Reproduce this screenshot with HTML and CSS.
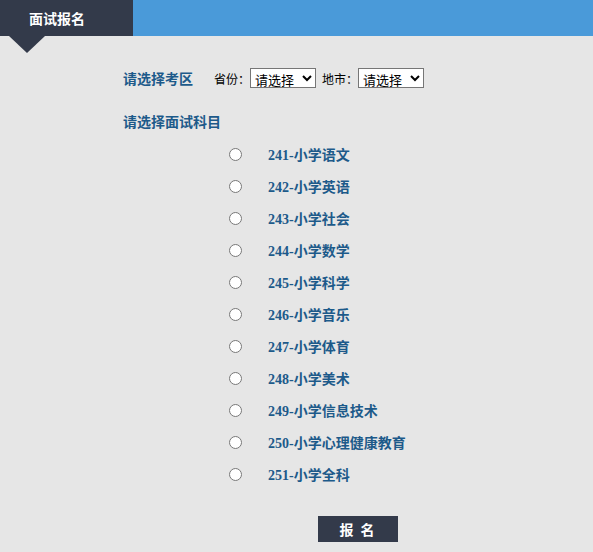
FILE: index.html
```html
<!DOCTYPE html>
<html lang="zh-CN">
<head>
    <meta charset="UTF-8">
    <title>面试报名</title>
    <link rel="stylesheet" href="styles.css">
</head>
<body>
    <div class="header">
        <div class="tab">面试报名</div>
    </div>
    <div class="content">
        <div class="area">
            <span class="title">请选择考区</span>
            <label class="field">省份：</label>
            <select class="pick"><option>请选择</option></select>
            <label class="field">地市：</label>
            <select class="pick"><option>请选择</option></select>
        </div>
        <div class="title subject-title">请选择面试科目</div>
        <ul class="subjects">
            <li><input type="radio" name="km"><span>241-小学语文</span></li>
            <li><input type="radio" name="km"><span>242-小学英语</span></li>
            <li><input type="radio" name="km"><span>243-小学社会</span></li>
            <li><input type="radio" name="km"><span>244-小学数学</span></li>
            <li><input type="radio" name="km"><span>245-小学科学</span></li>
            <li><input type="radio" name="km"><span>246-小学音乐</span></li>
            <li><input type="radio" name="km"><span>247-小学体育</span></li>
            <li><input type="radio" name="km"><span>248-小学美术</span></li>
            <li><input type="radio" name="km"><span>249-小学信息技术</span></li>
            <li><input type="radio" name="km"><span>250-小学心理健康教育</span></li>
            <li><input type="radio" name="km"><span>251-小学全科</span></li>
        </ul>
        <div class="actions">
            <button type="button" class="submit">报 名</button>
        </div>
    </div>
</body>
</html>
```
FILE: styles.css
```css
body {
    margin: 0;
    background-color: #e6e6e6;
    font-family: "Noto Sans CJK SC", sans-serif;
    height: 552px;
    overflow: hidden;
}
.header {
    height: 36px;
    background-color: #4a9ad9;
    display: flex;
}
.tab {
    position: relative;
    width: 133px;
    box-sizing: border-box;
    padding-left: 29px;
    background-color: #333a4a;
    color: #fff;
    font-size: 14px;
    font-weight: bold;
    line-height: 36px;
}
.tab::after {
    content: "";
    position: absolute;
    left: 9px;
    top: 36px;
    border-left: 18px solid transparent;
    border-right: 18px solid transparent;
    border-top: 17px solid #333a4a;
}
.content {
    padding-left: 123px;
    padding-top: 32px;
}
.area {
    display: flex;
    align-items: center;
    height: 20px;
}
.title {
    color: #1d5a8a;
    font-size: 14px;
    font-weight: bold;
}
.field {
    font-size: 12px;
    color: #000;
    margin-left: 21px;
}
.area .field + .pick + .field {
    margin-left: 6px;
}
.pick {
    width: 66px;
    height: 20px;
    font-family: "Noto Sans CJK SC", sans-serif;
    font-size: 13px;
    padding: 0;
    border: 1px solid #767676;
    background-color: #fff;
    color: #000;
}
.subject-title {
    margin-top: 23px;
    line-height: 20px;
}
.subjects {
    list-style: none;
    margin: 7px 0 0 106px;
    padding: 0;
}
.subjects li {
    display: flex;
    align-items: center;
    height: 32px;
}
.subjects input {
    width: 13px;
    height: 13px;
    margin: 0 26px 0 0;
}
.subjects span {
    color: #1d5a8a;
    font-family: "Liberation Serif", "Noto Sans CJK SC", serif;
    font-size: 14px;
    font-weight: bold;
}
.actions {
    margin-top: 26px;
    padding-left: 195px;
}
.submit {
    width: 80px;
    height: 26px;
    border: none;
    background-color: #333a4a;
    color: #fff;
    font-family: "Noto Sans CJK SC", sans-serif;
    font-size: 14px;
    font-weight: bold;
    letter-spacing: 2px;
    cursor: pointer;
}
```
